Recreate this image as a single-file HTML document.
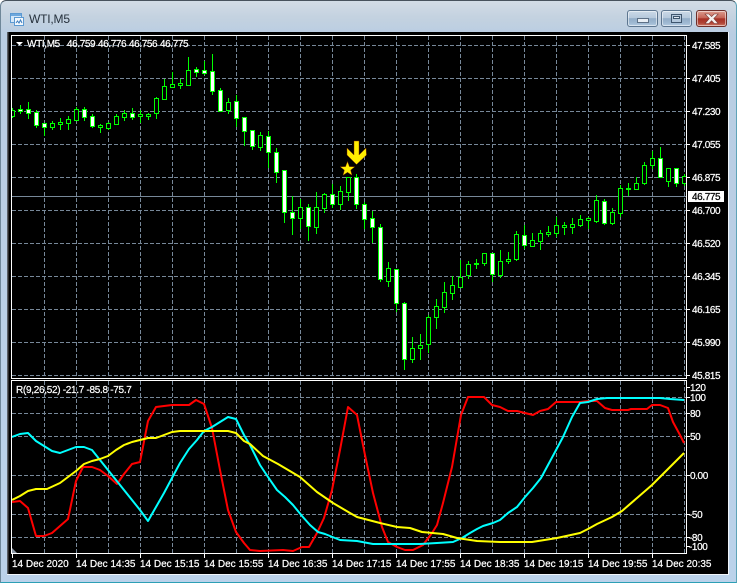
<!DOCTYPE html>
<html><head><meta charset="utf-8"><title>WTI,M5</title>
<style>
html,body{margin:0;padding:0;background:#fff;width:738px;height:584px;overflow:hidden}
#win{position:absolute;left:0;top:0;width:735px;height:581px;border:1px solid #6f8799;border-top-color:#47525d;border-bottom-color:#2c9fb5;border-right-color:#5fa3b8;border-radius:6px 6px 0 0;background:linear-gradient(180deg,#d2dce6 0,#c4d2e0 16px,#b9cde2 34px,#bbd2ea 100%)}
.b{position:absolute;top:10px;width:29px;height:15px;border:1px solid #5d7690;border-radius:3px;box-shadow:inset 0 0 0 1px rgba(255,255,255,.5);background:linear-gradient(180deg,#cbd9e7 0,#b6c9dc 46%,#92adc8 50%,#9fb9d2 80%,#b6cde2 100%)}
#c{background:linear-gradient(180deg,#dc9c8e 0,#c56456 46%,#a73024 52%,#b04436 80%,#cf7a66 100%);border-color:#6e2f2a}
svg{position:absolute;left:0;top:0;display:block}
text{font-family:"Liberation Sans",sans-serif;font-size:10px;fill:#fff;stroke:#fff;stroke-width:.22}
</style></head><body>
<div id="win"></div>
<div class="b" style="left:627px"></div>
<div class="b" style="left:661px"></div>
<div class="b" id="c" style="left:696px"></div>
<svg width="738" height="584" viewBox="0 0 738 584" xmlns="http://www.w3.org/2000/svg">
<defs>
<clipPath id="m"><rect x="12" y="36" width="674" height="342"/></clipPath>
<clipPath id="s"><rect x="12" y="381" width="674" height="172"/></clipPath>
</defs>
<!-- buttons glyphs -->
<rect x="637.5" y="18.5" width="11" height="4" fill="#e8eef4" stroke="#5d7086"/>
<rect x="671.5" y="14.5" width="10" height="8" fill="#b4c8dc" stroke="#3f566e" stroke-width="1"/>
<rect x="673.5" y="16.5" width="6" height="2" fill="#dfe9f2" stroke="#3f566e" stroke-width="1"/>
<path d="M705 14h4l2.6 2.6 2.6-2.6h4l-4.4 4.5 4.4 5h-4l-2.6-2.8-2.6 2.8h-4l4.4-5z" fill="#f4f0ee" stroke="#7a3a35" stroke-width=".6"/>
<!-- title icon -->
<rect x="10.5" y="13.5" width="11" height="9" fill="#d6e8f8" stroke="#5d9ad2"/>
<rect x="11" y="14" width="10" height="2" fill="#6ea8dd"/>
<rect x="14.5" y="17.5" width="9" height="8" fill="#f4f9fe" stroke="#5d9ad2"/>
<path d="M16 23l1.5-2 1.5 2 1.5-3 1.5 3" fill="none" stroke="#3d7dbd"/>
<text x="29" y="23" style="font-size:12px;fill:#26313c;stroke:none" letter-spacing="-.2">WTI,M5</text>
<!-- chart background -->
<rect x="7" y="32" width="721" height="542" fill="#000"/>
<rect x="7" y="32" width="1" height="542" fill="#5a5f66"/>
<rect x="8" y="32" width="1" height="542" fill="#2a2a2a"/>
<rect x="728" y="32" width="1" height="543" fill="#f0f5fa"/>
<rect x="7" y="574" width="722" height="1" fill="#f0f5fa"/>
<!-- grid -->
<g stroke="#778899" stroke-width="1" stroke-dasharray="4 2" fill="none" shape-rendering="crispEdges">
<path d="M12 45.5H686M12 78.5H686M12 111.5H686M12 144.5H686M12 177.5H686M12 210.5H686M12 243.5H686M12 276.5H686M12 309.5H686M12 342.5H686M12 375.5H686"/>
<path d="M12 397.5H686M12 413.5H686M12 436.5H686M12 475.5H686M12 514.5H686M12 537.5H686"/>
<path d="M44.5 36V378M76.5 36V378M108.5 36V378M140.5 36V378M172.5 36V378M204.5 36V378M236.5 36V378M268.5 36V378M300.5 36V378M332.5 36V378M364.5 36V378M396.5 36V378M428.5 36V378M460.5 36V378M492.5 36V378M524.5 36V378M556.5 36V378M588.5 36V378M620.5 36V378M652.5 36V378M684.5 36V378"/>
<path d="M44.5 381V553M76.5 381V553M108.5 381V553M140.5 381V553M172.5 381V553M204.5 381V553M236.5 381V553M268.5 381V553M300.5 381V553M332.5 381V553M364.5 381V553M396.5 381V553M428.5 381V553M460.5 381V553M492.5 381V553M524.5 381V553M556.5 381V553M588.5 381V553M620.5 381V553M652.5 381V553M684.5 381V553"/>
</g>
<path d="M12 196.5H686" stroke="#778899" stroke-width="1" shape-rendering="crispEdges"/>
<!-- candles -->
<g clip-path="url(#m)" shape-rendering="crispEdges" stroke="#00ff00" stroke-width="1">
<path fill="none" d="M12.5 108V118M20.5 105V114M28.5 102V119M36.5 110V128M44.5 123V136M52.5 121V130M60.5 118V130M68.5 116V130M76.5 107V120M84.5 107V121M92.5 114V128M100.5 124V133M108.5 122V130M116.5 114V125M124.5 110V121M132.5 108V120M140.5 110V123M148.5 113V120M156.5 97V119M164.5 79V99M172.5 72V87M180.5 79V89M188.5 57V85M196.5 67V77M204.5 61V75M212.5 54V95M220.5 88V111M228.5 98V114M236.5 95V127M244.5 117V146M252.5 130V150M260.5 132V151M268.5 131V168M276.5 148V183M284.5 170V223M292.5 196V235M300.5 199V229M308.5 204V241M316.5 192V234M324.5 193V213M332.5 184V208M340.5 186V210M348.5 177V201M356.5 174V209M364.5 202V229M372.5 211V243M380.5 224V282M388.5 262V287M396.5 269V312M404.5 302V370M412.5 337V363M420.5 334V360M428.5 315V353M436.5 299V329M444.5 282V313M452.5 276V300M460.5 260V287M468.5 261V279M476.5 259V269M484.5 253V266M492.5 253V282M500.5 250V278M508.5 252V264M516.5 231V261M524.5 225V249M532.5 233V247M540.5 230V250M548.5 226V237M556.5 217V237M564.5 222V235M572.5 218V234M580.5 215V227M588.5 217V229M596.5 195V223M604.5 199V225M612.5 208V225M620.5 185V217M628.5 183V196M636.5 177V189M644.5 162V185M652.5 151V169M660.5 147V177M668.5 168V187M676.5 168V187M684.5 174V186"/>
<path fill="#000" d="M10.5 110.5h4v6h-4zM50.5 123.5h4v4h-4zM58.5 122.5h4v2h-4zM66.5 119.5h4v4h-4zM74.5 109.5h4v11h-4zM98.5 125.5h4v2h-4zM106.5 123.5h4v5h-4zM114.5 116.5h4v8h-4zM122.5 113.5h4v4h-4zM138.5 114.5h4v2h-4zM146.5 114.5h4v2h-4zM154.5 98.5h4v15h-4zM162.5 86.5h4v13h-4zM170.5 84.5h4v3h-4zM178.5 83.5h4v2h-4zM186.5 70.5h4v15h-4zM226.5 102.5h4v8h-4zM258.5 135.5h4v12h-4zM298.5 207.5h4v11h-4zM314.5 207.5h4v20h-4zM322.5 194.5h4v14h-4zM338.5 191.5h4v13h-4zM346.5 177.5h4v15h-4zM386.5 268.5h4v13h-4zM410.5 348.5h4v11h-4zM418.5 345.5h4v3h-4zM426.5 317.5h4v27h-4zM434.5 306.5h4v11h-4zM442.5 292.5h4v15h-4zM450.5 285.5h4v8h-4zM458.5 277.5h4v10h-4zM466.5 264.5h4v11h-4zM474.5 263.5h4v1h-4zM482.5 253.5h4v10h-4zM498.5 261.5h4v14h-4zM506.5 259.5h4v2h-4zM514.5 234.5h4v25h-4zM530.5 240.5h4v6h-4zM538.5 233.5h4v8h-4zM546.5 232.5h4v2h-4zM554.5 225.5h4v8h-4zM562.5 225.5h4v2h-4zM570.5 224.5h4v3h-4zM578.5 219.5h4v6h-4zM586.5 218.5h4v2h-4zM594.5 200.5h4v21h-4zM610.5 212.5h4v11h-4zM618.5 188.5h4v25h-4zM626.5 188.5h4v1h-4zM634.5 183.5h4v6h-4zM642.5 165.5h4v18h-4zM650.5 158.5h4v7h-4zM666.5 168.5h4v13h-4zM682.5 176.5h4v7h-4z"/>
<path fill="#fff" d="M18.5 109.5h4v2h-4zM26.5 109.5h4v4h-4zM34.5 112.5h4v13h-4zM42.5 123.5h4v4h-4zM82.5 109.5h4v8h-4zM90.5 116.5h4v10h-4zM130.5 113.5h4v4h-4zM194.5 69.5h4v3h-4zM202.5 70.5h4v3h-4zM210.5 71.5h4v20h-4zM218.5 90.5h4v21h-4zM234.5 101.5h4v17h-4zM242.5 117.5h4v14h-4zM250.5 130.5h4v16h-4zM266.5 136.5h4v16h-4zM274.5 152.5h4v20h-4zM282.5 170.5h4v42h-4zM290.5 212.5h4v6h-4zM306.5 207.5h4v19h-4zM330.5 194.5h4v10h-4zM354.5 177.5h4v27h-4zM362.5 204.5h4v15h-4zM370.5 218.5h4v9h-4zM378.5 227.5h4v52h-4zM394.5 269.5h4v34h-4zM402.5 303.5h4v56h-4zM490.5 253.5h4v21h-4zM522.5 235.5h4v10h-4zM602.5 201.5h4v22h-4zM658.5 158.5h4v19h-4zM674.5 168.5h4v15h-4z"/>
</g>
<!-- arrow & star -->
<polygon points="354,141 359,141 359,155 366,148 366.5,155 356.5,164.5 347,155 347,148 354,155" fill="#ffee00" stroke="#8a2a00" stroke-width=".4"/>
<polygon points="347.5,161.5 349.4,166.6 354.8,166.8 350.6,170.1 352,175.3 347.5,172.3 343,175.3 344.4,170.1 340.2,166.8 345.6,166.6" fill="#ffee00" stroke="#8a2a00" stroke-width=".4"/>
<!-- indicator lines -->
<g clip-path="url(#s)" fill="none" stroke-width="2" stroke-linejoin="round">
<polyline stroke="#ff0000" points="12,502 20,501 28,508 36,536 44,536 52,533 60,526 68,519 76,481 83,467 92,467 100,470 108,476 117,484 124,474 132,464 140,462 148,421 156,407 164,406 172,405 189,405 196,400 204,404 212,428 220,470 228,510 236,532 244,543 250,550 260,551 283,550 293,551 302,547 309,547 317,533 324,518 332,490 340,450 348,407 357,415 365,455 373,493 382,527 388,542 397,547 405,550 413,550 423,545 432,533 437,525 443,503 452,467 461,415 468,397 484,397 492,405 500,407 508,411 517,411 525,413 533,415 540,411 548,409 556,402 580,402 588,401 597,401 605,408 612,410 628,410 631,409 647,409 652,405 660,405 668,408 673,422 680,435 684,443"/>
<polyline stroke="#00ffff" points="12,437 20,434 28,433 36,441 44,446 52,451 60,453 68,450 76,447 84,447 92,450 100,460 108,470 116,480 124,490 132,500 140,510 148,521 156,507 164,493 172,478 180,463 189,449 197,440 204,431 212,427 220,422 228,417 236,419 244,435 250,445 260,465 268,477 277,490 285,497 293,505 302,516 310,525 318,532 325,534 340,540 357,541 373,544 420,544 437,543 453,542 462,538 470,533 477,529 483,526 493,523 500,520 508,513 517,507 525,497 533,488 541,478 548,465 555,452 563,437 572,417 580,403 588,402 597,399 607,398 660,398 670,399 684,400"/>
<polyline stroke="#ffff00" points="12,500 20,496 28,491 36,489 47,489 60,483 68,477 76,471 84,464 92,461 100,459 108,456 116,450 124,445 132,442 140,440 148,438 156,438 164,435 172,432 180,431 228,431 236,433 244,441 250,444 263,456 278,464 300,477 317,492 333,503 350,513 357,517 380,523 397,527 410,528 422,532 443,534 457,538 477,541 500,542 532,542 557,538 580,533 588,529 597,524 612,517 622,511 637,498 652,485 667,470 684,453"/>
</g>
<polygon points="12,548 17,553 12,553" fill="#8f9aa8"/>
<!-- frames -->
<g fill="none" stroke="#fff" stroke-width="1" shape-rendering="crispEdges">
<rect x="11.5" y="35.5" width="675" height="343"/>
<rect x="11.5" y="380.5" width="675" height="173"/>
</g>
<!-- ticks -->
<g stroke="#fff" stroke-width="1" shape-rendering="crispEdges">
<path d="M687 45.5h3M687 78.5h3M687 111.5h3M687 144.5h3M687 177.5h3M687 210.5h3M687 243.5h3M687 276.5h3M687 309.5h3M687 342.5h3M687 375.5h3M687 387.5h3M687 397.5h3M687 413.5h3M687 436.5h3M687 475.5h3M687 514.5h3M687 537.5h3M687 546.5h3"/>
<path d="M12.5 554v4M76.5 554v4M140.5 554v4M204.5 554v4M268.5 554v4M332.5 554v4M396.5 554v4M460.5 554v4M524.5 554v4M588.5 554v4M652.5 554v4"/>
</g>
<!-- legend -->
<polygon points="16,42 23,42 19.5,45.5" fill="#fff"/>
<text x="27" y="47" letter-spacing="-.35">WTI,M5</text>
<text x="67" y="47" letter-spacing="-.4">46.759</text>
<text x="98" y="47" letter-spacing="-.4">46.776</text>
<text x="129" y="47" letter-spacing="-.4">46.756</text>
<text x="160" y="47" letter-spacing="-.4">46.775</text>
<text x="16" y="393" letter-spacing="-.3">R(9,26,52) -21.7 -85.8 -75.7</text>
<!-- price axis -->
<g letter-spacing="-.4">
<text x="692" y="49">47.585</text>
<text x="692" y="82">47.405</text>
<text x="692" y="115">47.230</text>
<text x="692" y="148">47.055</text>
<text x="692" y="181">46.875</text>
<text x="692" y="214">46.700</text>
<text x="692" y="247">46.520</text>
<text x="692" y="280">46.345</text>
<text x="692" y="313">46.165</text>
<text x="692" y="346">45.990</text>
<text x="692" y="379">45.815</text>
</g>
<rect x="688" y="191" width="36" height="11" fill="#fff"/>
<text x="692" y="200" letter-spacing="-.4" style="fill:#000;stroke:#000">46.775</text>
<!-- indicator axis -->
<g letter-spacing="-.4">
<text x="690" y="391">120</text>
<text x="690" y="401">100</text>
<text x="690" y="417">80</text>
<text x="690" y="440">50</text>
<text x="690" y="479">0.00</text>
<text x="689" y="518">-50</text>
<text x="689" y="541">-80</text>
<text x="689" y="550">-100</text>
</g>
<!-- time axis -->
<text x="12" y="567">14 Dec 2020</text>
<text x="76" y="567">14 Dec 14:35</text>
<text x="140" y="567">14 Dec 15:15</text>
<text x="204" y="567">14 Dec 15:55</text>
<text x="268" y="567">14 Dec 16:35</text>
<text x="332" y="567">14 Dec 17:15</text>
<text x="396" y="567">14 Dec 17:55</text>
<text x="460" y="567">14 Dec 18:35</text>
<text x="524" y="567">14 Dec 19:15</text>
<text x="588" y="567">14 Dec 19:55</text>
<text x="652" y="567">14 Dec 20:35</text>
</svg>
</body></html>
